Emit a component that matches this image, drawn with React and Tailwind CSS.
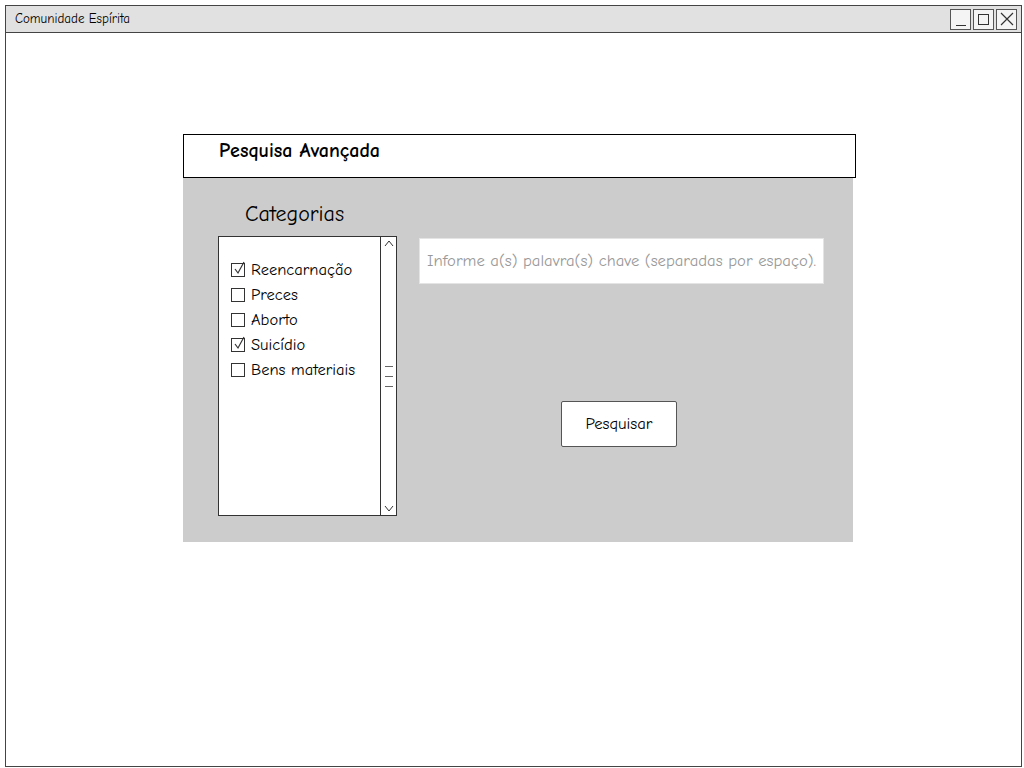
import React from "react";

const FONT = { fontFamily: '"Comic Sans MS", "Comic Neue", "DejaVu Sans", sans-serif' };

const CATEGORIES = [
  { label: "Reencarnação", checked: true },
  { label: "Preces", checked: false },
  { label: "Aborto", checked: false },
  { label: "Suicídio", checked: true },
  { label: "Bens materiais", checked: false },
];

function CheckBox({ checked }) {
  return (
    <span className="relative w-[14px] h-[14px] border border-[#333] bg-white shrink-0">
      {checked && (
        <svg className="absolute -top-[3px] left-[1px]" width="13" height="14" viewBox="0 0 13 14">
          <path d="M2 8 L5 12 L11 1" fill="none" stroke="#333" strokeWidth="1.2" />
        </svg>
      )}
    </span>
  );
}

function WinButton({ children }) {
  return (
    <div className="w-[21px] h-[21px] border border-[#555] bg-[#f4f4f4] flex items-center justify-center">
      {children}
    </div>
  );
}

export default function App() {
  return (
    <div className="w-[1024px] h-[768px] bg-white pt-[5px] pl-[5px]" style={FONT}>
      <div className="w-[1017px] h-[762px] border border-[#444] flex flex-col">
        {/* title bar */}
        <div className="h-[27px] bg-[#e1e1e1] border-b border-[#444] flex items-center justify-between pl-[9px] pr-[4px]">
          <span className="text-[13px] text-black">Comunidade Espírita</span>
          <div className="flex gap-[2px]">
            <WinButton>
              <span className="w-[10px] h-[1px] bg-[#333] mt-[12px]" />
            </WinButton>
            <WinButton>
              <span className="w-[11px] h-[11px] border border-[#333]" />
            </WinButton>
            <WinButton>
              <svg width="14" height="14" viewBox="0 0 14 14">
                <path d="M1 1 L13 13 M13 1 L1 13" stroke="#333" strokeWidth="1.2" />
              </svg>
            </WinButton>
          </div>
        </div>

        {/* panel */}
        <div className="mt-[101px] ml-[177px] w-[673px]">
          <div className="h-[44px] border border-black bg-white pl-[35px] pt-[2px]">
            <span className="text-[20px] leading-[28px] font-bold text-black">Pesquisa Avançada</span>
          </div>
          <div className="w-[670px] h-[364px] bg-[#cccccc] flex pl-[35px]">
            <div className="flex flex-col">
              <div className="h-[58px] pt-[22px] pl-[27px] text-[22px] leading-[28px] text-black">Categorias</div>
              <div className="w-[179px] h-[280px] border border-[#333] bg-white flex">
                <div className="flex-1 flex flex-col gap-[11px] pt-[26px] pl-[12px]">
                  {CATEGORIES.map((c) => (
                    <div key={c.label} className="flex items-center gap-[6px] h-[14px]">
                      <CheckBox checked={c.checked} />
                      <span className="text-[16.5px] leading-[14px] text-black whitespace-nowrap">{c.label}</span>
                    </div>
                  ))}
                </div>
                <div className="w-[16px] border-l border-[#333] flex flex-col items-center justify-between py-[3px]">
                  <svg width="10" height="7" viewBox="0 0 10 7">
                    <path d="M1 6 L5 1 L9 6" fill="none" stroke="#333" strokeWidth="1" />
                  </svg>
                  <div className="flex flex-col gap-[9px]">
                    <span className="w-[8px] h-[1px] bg-[#666]" />
                    <span className="w-[8px] h-[1px] bg-[#666]" />
                    <span className="w-[8px] h-[1px] bg-[#666]" />
                  </div>
                  <svg width="10" height="7" viewBox="0 0 10 7">
                    <path d="M1 1 L5 6 L9 1" fill="none" stroke="#333" strokeWidth="1" />
                  </svg>
                </div>
              </div>
            </div>

            <div className="flex flex-col pl-[22px] pt-[60px]">
              <div className="w-[405px] h-[46px] bg-white border border-[#e4e4e4] flex items-center pl-[7px]">
                <span className="text-[16.7px] text-[#999] whitespace-nowrap">Informe a(s) palavra(s) chave (separadas por espaço).</span>
              </div>
              <button className="mt-[117px] ml-[142px] w-[116px] h-[46px] bg-white border border-[#555] rounded-[2px] text-[16.7px] text-black">
                Pesquisar
              </button>
            </div>
          </div>
        </div>
      </div>
    </div>
  );
}
